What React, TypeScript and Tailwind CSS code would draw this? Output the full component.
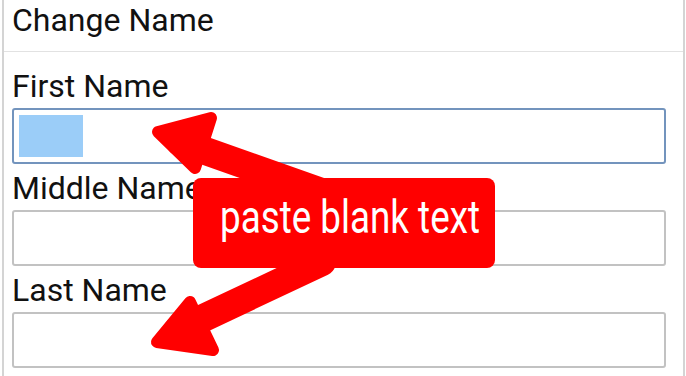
import React from "react";

function Field({ label, first, focused }: { label: string; first?: boolean; focused?: boolean }) {
  return (
    <div className={first ? "pt-[10px]" : ""}>
      <div className="h-[46px] flex items-end pb-[6px]">
        <span className="text-[32px] leading-none text-[#111]">{label}</span>
      </div>
      <div
        className={
          "w-[654px] h-[56px] rounded-[3px] bg-white " +
          (focused ? "border-2 border-[#7394bd] p-[5px]" : "border-2 border-[#c2c2c2]")
        }
      >
        {focused && <div className="w-[64px] h-[42px] bg-[#9bcdf8]" />}
      </div>
    </div>
  );
}

export default function App() {
  return (
    <div className="relative w-[686px] h-[376px] bg-white overflow-hidden font-['Roboto',sans-serif]">
      <div className="ml-[2px] w-[683px] h-full border-x-2 border-[#d4d4d4]">
        <div className="h-[52px] pt-[4px] pl-[8px] border-b border-[#e2e2e2]">
          <span className="text-[32px] leading-none text-[#111]">Change Name</span>
        </div>
        <div className="pl-[8px]">
          <Field label="First Name" first focused />
          <Field label="Middle Name" />
          <Field label="Last Name" />
        </div>
      </div>

      <svg className="absolute inset-0 pointer-events-none" width="686" height="376" viewBox="0 0 686 376">
        <g fill="#ff0000" stroke="#ff0000" strokeLinejoin="round" strokeLinecap="round">
          <line x1="180" y1="142" x2="330" y2="195" strokeWidth="28" />
          <polygon points="158,132 211,118 195,168" strokeWidth="12" />
          <line x1="178" y1="330" x2="322" y2="262" strokeWidth="28" />
          <polygon points="157,342 190,302 213,350" strokeWidth="12" />
        </g>
      </svg>

      <div className="absolute left-[193px] top-[178px] w-[302px] h-[90px] rounded-[8px] bg-[#ff0000] pl-[27px] pt-[16px]">
        <div className="origin-left scale-x-[0.8] whitespace-nowrap text-[46px] leading-none text-white">
          paste blank text
        </div>
      </div>
    </div>
  );
}
